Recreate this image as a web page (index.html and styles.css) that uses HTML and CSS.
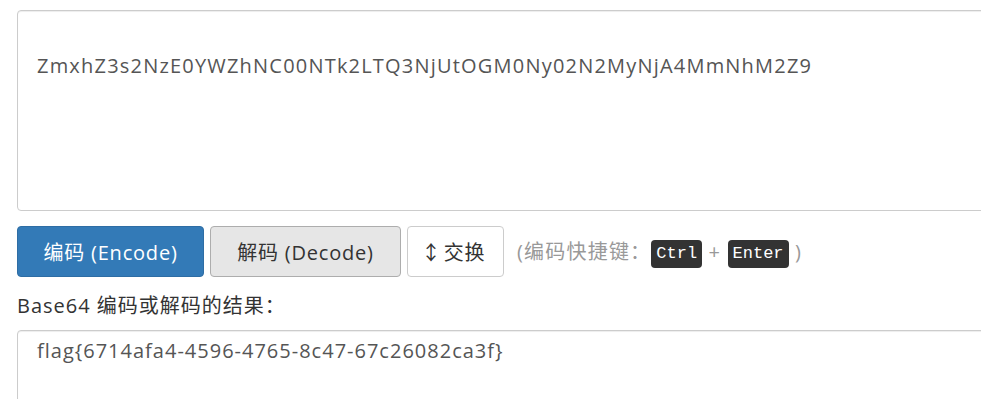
FILE: index.html
```html
<!DOCTYPE html>
<html>
	<head>
		<meta charset="utf-8" />
		<title>Base64 编码解码</title>
		<link rel="stylesheet" href="styles.css">
	</head>
	<body>
		<div class="tool">
			<textarea class="box box-src">

ZmxhZ3s2NzE0YWZhNC00NTk2LTQ3NjUtOGM0Ny02N2MyNjA4MmNhM2Z9</textarea>
			<div class="actions">
				<button class="btn btn-primary">编码 (Encode)</button>
				<button class="btn btn-gray">解码 (Decode)</button>
				<button class="btn btn-white"><span class="arr">↕</span>交换</button>
				<span class="hint">(编码快捷键：<kbd>Ctrl</kbd> + <kbd>Enter</kbd> )</span>
			</div>
			<div class="label">Base64 编码或解码的结果：</div>
			<textarea class="box box-out">flag{6714afa4-4596-4765-8c47-67c26082ca3f}</textarea>
		</div>
	</body>
</html>
```
FILE: styles.css
```css
* {
	margin: 0;
	padding: 0;
	box-sizing: border-box;
}

body {
	font-family: "Open Sans", "Noto Sans CJK SC", sans-serif;
	color: #333;
	background: #fff;
	overflow: hidden;
}

.tool {
	padding: 10px 0 0 17px;
	width: 1100px;
}

.box {
	display: block;
	width: 100%;
	border: 1px solid #ccc;
	border-radius: 4px;
	box-shadow: inset 0 1px 1px rgba(0, 0, 0, .075);
	font-family: "Open Sans", "Noto Sans CJK SC", sans-serif;
	font-size: 20px;
	letter-spacing: 1.2px;
	line-height: 24px;
	color: #555;
	padding: 6px 19px;
	resize: none;
	outline: none;
}

.box-src {
	height: 201px;
	padding-top: 19px;
}

.box-out {
	height: 120px;
	padding-top: 8px;
	letter-spacing: 1px;
}

.actions {
	display: flex;
	align-items: center;
	gap: 6px;
	margin-top: 15px;
}

.btn {
	height: 51px;
	border: 1px solid #ccc;
	border-radius: 4px;
	font-family: "Open Sans", "Noto Sans CJK SC", sans-serif;
	font-size: 20px;
	letter-spacing: 0.8px;
	padding: 0 10px;
	color: #333;
	background: #fff;
}

.btn-primary {
	width: 187px;
	background: #337ab7;
	border-color: #2e6da4;
	color: #fff;
}

.btn-gray {
	width: 191px;
	background: #e6e6e6;
	border-color: #adadad;
}

.btn-white {
	width: 97px;
	text-align: left;
	padding-left: 13px;
}

.arr {
	margin-right: 2px;
}

.hint {
	margin-left: 7px;
	font-size: 20px;
	letter-spacing: 1.2px;
	color: #999;
}

kbd {
	display: inline-block;
	padding: 1px 5px;
	font-family: "Liberation Mono", monospace;
	font-size: 17px;
	letter-spacing: 0;
	line-height: 26px;
	color: #fff;
	background: #333;
	border-radius: 4px;
	vertical-align: 1px;
}

.label {
	margin: 14px 0 9px;
	font-size: 20px;
	letter-spacing: 1px;
	line-height: 30px;
}
```
